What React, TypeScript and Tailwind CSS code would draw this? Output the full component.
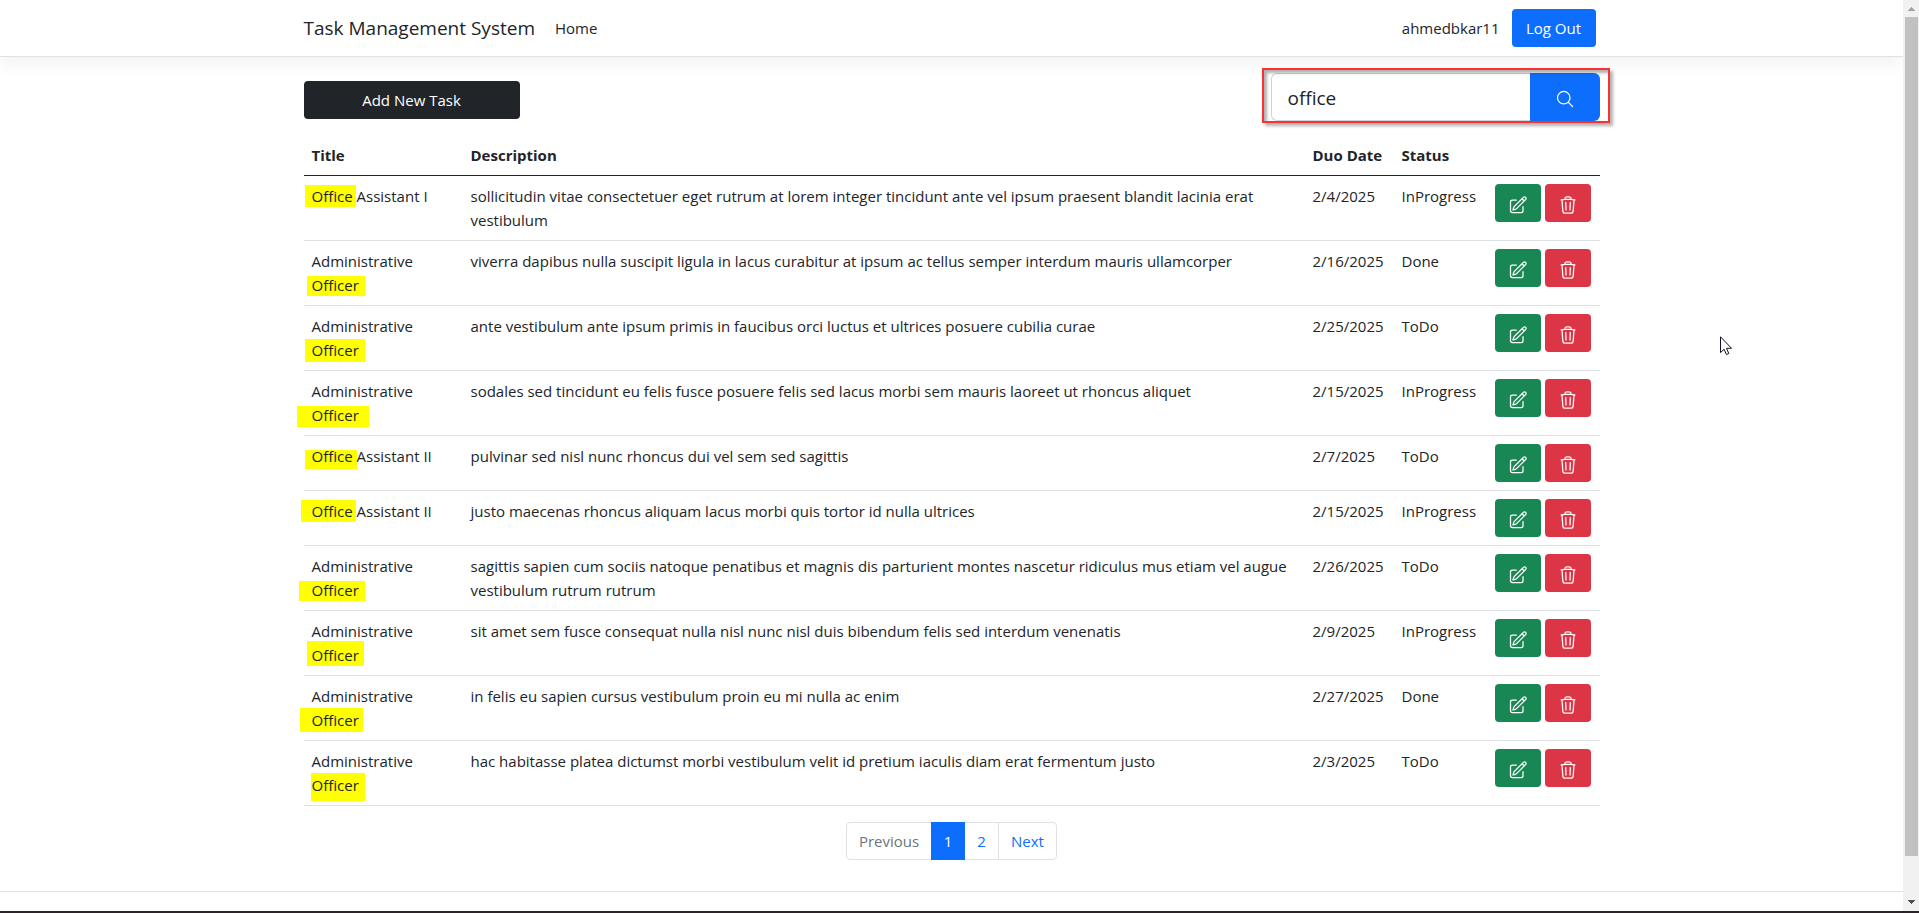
import { HiOutlineMagnifyingGlass, HiOutlinePencilSquare, HiOutlineTrash } from "react-icons/hi2";

type Task = {
  match: string;
  before?: string;
  after?: string;
  description: string;
  due: string;
  status: "InProgress" | "Done" | "ToDo";
  marker: string;
};

const tasks: Task[] = [
  { match: "Office", after: " Assistant I", description: "sollicitudin vitae consectetuer eget rutrum at lorem integer tincidunt ante vel ipsum praesent blandit lacinia erat vestibulum", due: "2/4/2025", status: "InProgress", marker: "left-[1px] top-[9px] w-[51px] h-[22px]" },
  { before: "Administrative", match: "Officer", description: "viverra dapibus nulla suscipit ligula in lacus curabitur at ipsum ac tellus semper interdum mauris ullamcorper", due: "2/16/2025", status: "Done", marker: "left-[3px] top-[35px] w-[58px] h-[20px]" },
  { before: "Administrative", match: "Officer", description: "ante vestibulum ante ipsum primis in faucibus orci luctus et ultrices posuere cubilia curae", due: "2/25/2025", status: "ToDo", marker: "left-[1px] top-[33px] w-[60px] h-[23px]" },
  { before: "Administrative", match: "Officer", description: "sodales sed tincidunt eu felis fusce posuere felis sed lacus morbi sem mauris laoreet ut rhoncus aliquet", due: "2/15/2025", status: "InProgress", marker: "left-[-7px] top-[35px] w-[72px] h-[21px]" },
  { match: "Office", after: " Assistant II", description: "pulvinar sed nisl nunc rhoncus dui vel sem sed sagittis", due: "2/7/2025", status: "ToDo", marker: "left-[1px] top-[14px] w-[52px] h-[19px]" },
  { match: "Office", after: " Assistant II", description: "justo maecenas rhoncus aliquam lacus morbi quis tortor id nulla ultrices", due: "2/15/2025", status: "InProgress", marker: "left-[-3px] top-[9px] w-[55px] h-[22px]" },
  { before: "Administrative", match: "Officer", description: "sagittis sapien cum sociis natoque penatibus et magnis dis parturient montes nascetur ridiculus mus etiam vel augue vestibulum rutrum rutrum", due: "2/26/2025", status: "ToDo", marker: "left-[-5px] top-[35px] w-[66px] h-[20px]" },
  { before: "Administrative", match: "Officer", description: "sit amet sem fusce consequat nulla nisl nunc nisl duis bibendum felis sed interdum venenatis", due: "2/9/2025", status: "InProgress", marker: "left-[3px] top-[30px] w-[57px] h-[25px]" },
  { before: "Administrative", match: "Officer", description: "in felis eu sapien cursus vestibulum proin eu mi nulla ac enim", due: "2/27/2025", status: "Done", marker: "left-[-4px] top-[32px] w-[63px] h-[24px]" },
  { before: "Administrative", match: "Officer", description: "hac habitasse platea dictumst morbi vestibulum velit id pretium iaculis diam erat fermentum justo", due: "2/3/2025", status: "ToDo", marker: "left-[7px] top-[32px] w-[54px] h-[28px]" },
];

function Navbar() {
  return (
    <header className="border-b border-[#dee2e6] bg-white shadow-[0_8px_16px_rgba(0,0,0,0.05)]">
      <nav className="mx-auto flex h-14 max-w-[1320px] items-center px-3">
        <a href="#home" className="text-[19px] leading-[30px]">Task Management System</a>
        <a href="#home" className="ml-5">Home</a>
        <a href="#account" className="ml-auto">ahmedbkar11</a>
        <button type="button" className="ml-3 mr-1 h-[38px] w-[84px] rounded bg-[#0d6efd] text-white">Log Out</button>
      </nav>
    </header>
  );
}

function Toolbar() {
  return (
    <div className="flex items-start justify-between pt-4">
      <button type="button" className="mt-2 h-[38px] w-1/6 rounded bg-[#212529] text-white">Add New Task</button>
      <form className="relative flex h-12 w-[329px]" onSubmit={(e) => e.preventDefault()}>
        <input
          type="text"
          aria-label="Search tasks"
          defaultValue="office"
          className="min-w-0 flex-1 rounded-l-md border border-r-0 border-[#ced4da] bg-white px-4 pt-1 pb-0.5 text-[19px] outline-none"
        />
        <button type="submit" aria-label="Search" className="flex w-[70px] items-center justify-center rounded-r-md bg-[#0d6efd] pt-1 text-white">
          <HiOutlineMagnifyingGlass size={20} />
        </button>
        <div className="pointer-events-none absolute -left-[9px] -right-[10px] -top-[5px] h-[55px] border-2 border-[#fb3030] shadow-[3px_3px_3px_rgba(0,0,0,0.3),inset_3px_3px_3px_rgba(0,0,0,0.3)]" />
      </form>
    </div>
  );
}

function TaskRow({ task }: { task: Task }) {
  const cell = "border-b border-[#dee2e6] p-2";
  return (
    <tr className="align-top">
      <td className={cell + " relative isolate"}>
        <span className={"absolute -z-10 bg-[#ffff00] " + task.marker} />
        {task.before && <span className="block">{task.before}</span>}
        <mark className="bg-transparent text-inherit">{task.match}</mark>
        {task.after}
      </td>
      <td className={cell}>{task.description}</td>
      <td className={cell}>{task.due}</td>
      <td className={cell}>{task.status}</td>
      <td className={cell}>
        <div className="flex gap-1">
          <button type="button" aria-label="Edit task" className="flex h-[38px] w-[46px] items-center justify-center rounded bg-[#198754] pt-1 text-white">
            <HiOutlinePencilSquare size={20} />
          </button>
          <button type="button" aria-label="Delete task" className="flex h-[38px] w-[46px] items-center justify-center rounded bg-[#dc3545] pt-1 text-white">
            <HiOutlineTrash size={20} />
          </button>
        </div>
      </td>
    </tr>
  );
}

function TaskTable() {
  const head = "border-b border-[#212529] p-2 font-bold";
  return (
    <table className="mt-[14px] w-full table-fixed border-separate border-spacing-0 text-left">
      <colgroup>
        <col className="w-[159px]" />
        <col />
        <col className="w-[89px]" />
        <col className="w-[93px]" />
        <col className="w-[113px]" />
      </colgroup>
      <thead>
        <tr className="whitespace-nowrap">
          <th scope="col" className={head}>Title</th>
          <th scope="col" className={head}>Description</th>
          <th scope="col" className={head}>Duo Date</th>
          <th scope="col" className={head}>Status</th>
          <td className={head} />
        </tr>
      </thead>
      <tbody>
        {tasks.map((task, i) => (
          <TaskRow key={i} task={task} />
        ))}
      </tbody>
    </table>
  );
}

function Pagination() {
  return (
    <nav aria-label="Pages" className="mt-4 flex justify-center">
      <div className="flex h-[38px] rounded border border-[#dee2e6] text-[#0d6efd]">
        <button type="button" disabled className="w-[84px] text-[#6c757d]">Previous</button>
        <a href="#page-1" aria-current="page" className="-my-px flex w-[34px] items-center justify-center bg-[#0d6efd] text-white">1</a>
        <a href="#page-2" className="flex w-[34px] items-center justify-center border-r border-[#dee2e6]">2</a>
        <a href="#next" className="flex w-[57px] items-center justify-center">Next</a>
      </div>
    </nav>
  );
}

function Scrollbar() {
  return (
    <div aria-hidden="true" className="flex w-4 shrink-0 flex-col items-center bg-[#f1f1f1]">
      <svg width="16" height="17" viewBox="0 0 16 17" fill="#a3a3a3" className="shrink-0">
        <path d="M5 11h7v-1h-1V9h-1V8H9V7H8v1H7v1H6v1H5z" />
      </svg>
      <div className="w-[13px] flex-1 bg-[#c1c1c1]" />
      <div className="flex h-[55px] items-end">
        <svg width="16" height="17" viewBox="0 0 16 17" fill="#505050">
          <path d="M5 6h7v1h-1v1h-1v1H9v1H8V9H7V8H6V7H5z" />
        </svg>
      </div>
    </div>
  );
}

export default function App() {
  return (
    <div className="relative flex min-h-screen flex-col border-b-2 border-[#2e2229] bg-white font-['Open_Sans','Noto_Sans',sans-serif] text-[15px] leading-6 text-[#212529]">
      <div className="flex flex-1">
        <div className="flex min-w-0 flex-1 flex-col">
          <Navbar />
          <main className="mx-auto w-full max-w-[1320px] flex-1 px-3">
            <Toolbar />
            <TaskTable />
            <Pagination />
          </main>
          <footer className="h-5 border-t border-[#dee2e6]" />
        </div>
        <Scrollbar />
      </div>
      <svg aria-hidden="true" className="absolute left-[1720px] top-[336px]" width="13" height="20" viewBox="0 0 13 20">
        <path d="M.5.8v15.8l3.6-3.4 2.3 5.3 2.4-1-2.3-5.2h5z" fill="#fff" stroke="#14101f" />
      </svg>
    </div>
  );
}
